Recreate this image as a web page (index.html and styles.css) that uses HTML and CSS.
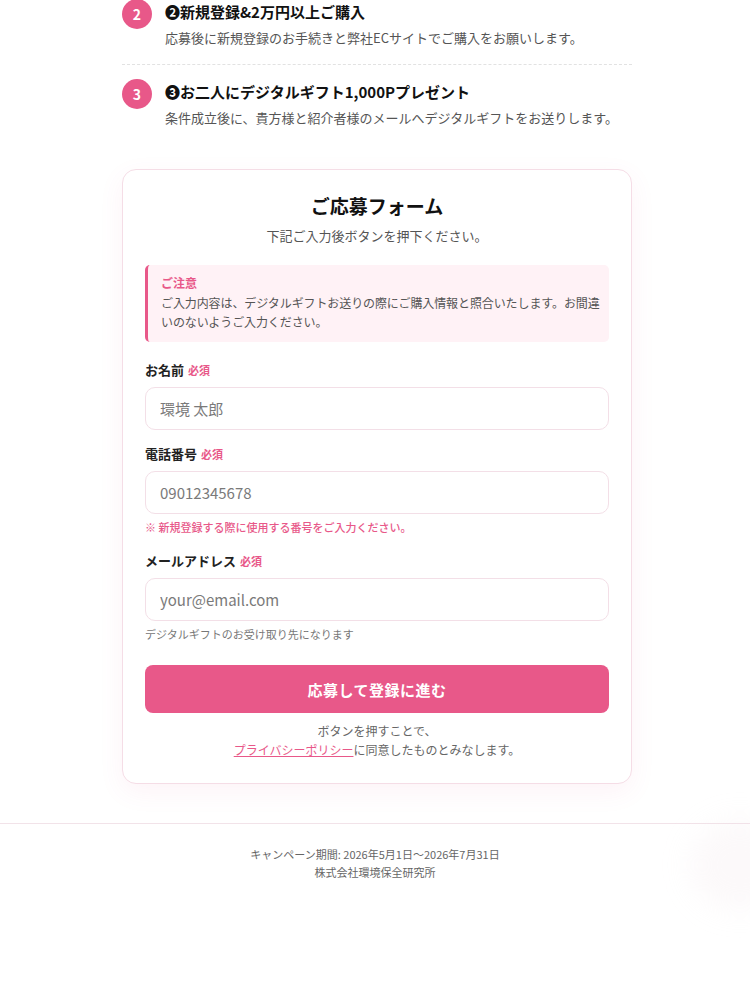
FILE: index.html
```html
<!DOCTYPE html>
<html lang="ja">
<head>
<meta charset="utf-8">
<link rel="stylesheet" href="styles.css">
</head>
<body>
<div class="page">
  <main class="wrap">
    <ol class="steps">
      <li class="step">
        <span class="num">2</span>
        <div class="step-body">
          <h3 class="step-title">❷新規登録&amp;2万円以上ご購入</h3>
          <p class="step-desc">応募後に新規登録のお手続きと弊社ECサイトでご購入をお願いします。</p>
        </div>
      </li>
      <li class="step">
        <span class="num">3</span>
        <div class="step-body">
          <h3 class="step-title">❸お二人にデジタルギフト1,000Pプレゼント</h3>
          <p class="step-desc">条件成立後に、貴方様と紹介者様のメールへデジタルギフトをお送りします。</p>
        </div>
      </li>
    </ol>

    <section class="card">
      <h2 class="card-title">ご応募フォーム</h2>
      <p class="card-sub">下記ご入力後ボタンを押下ください。</p>

      <div class="notice">
        <p class="notice-title">ご注意</p>
        <p class="notice-text">ご入力内容は、デジタルギフトお送りの際にご購入情報と照合いたします。お間違いのないようご入力ください。</p>
      </div>

      <div class="field">
        <label class="label">お名前 <span class="req">必須</span></label>
        <input class="input" type="text" placeholder="環境 太郎">
      </div>

      <div class="field">
        <label class="label">電話番号 <span class="req">必須</span></label>
        <input class="input" type="tel" placeholder="09012345678">
        <p class="note-pink">※ 新規登録する際に使用する番号をご入力ください。</p>
      </div>

      <div class="field field-mail">
        <label class="label">メールアドレス <span class="req">必須</span></label>
        <input class="input" type="email" placeholder="your@email.com">
        <p class="note-gray">デジタルギフトのお受け取り先になります</p>
      </div>

      <button class="submit" type="button">応募して登録に進む</button>

      <p class="agree">ボタンを押すことで、<br><a class="link" href="#">プライバシーポリシー</a>に同意したものとみなします。</p>
    </section>
  </main>

  <footer class="footer">
    <p>キャンペーン期間: 2026年5月1日〜2026年7月31日</p>
    <p>株式会社環境保全研究所</p>
  </footer>

  <div class="blob"></div>
</div>
</body>
</html>
```

FILE: styles.css
```css
* { box-sizing: border-box; }
html, body { margin: 0; padding: 0; background: #fff; }
body {
  font-family: "Noto Sans CJK JP", "Noto Sans", sans-serif;
  color: #222;
}
.page { position: relative; overflow: hidden; min-height: 1000px; }
.wrap { width: 510px; margin: 0 auto; padding: 0; }
.page > .wrap { margin-left: calc(50% - 253px); }

.steps { list-style: none; margin: 0; padding: 0; }
.step {
  display: flex;
  gap: 13px;
  align-items: flex-start;
  padding: 0 0 15px;
}
.step + .step {
  border-top: 1px dashed #e2e2e2;
  padding-top: 14px;
}
.step:first-child { margin-top: -1px; }
.num {
  flex: none;
  width: 30px; height: 30px;
  border-radius: 50%;
  background: #e85889;
  color: #fff;
  font-weight: 700;
  font-size: 14px;
  display: flex; align-items: center; justify-content: center;
}
.step-body { padding-top: 1px; }
.step-title {
  margin: 0;
  font-size: 15px;
  font-weight: 700;
  line-height: 24px;
  color: #111;
}
.step-desc {
  margin: 3px 0 0;
  font-size: 13px;
  line-height: 22px;
  color: #555;
}

.card {
  margin-top: 25px;
  border: 1px solid #f5dde6;
  border-radius: 14px;
  padding: 22px 22px 24px;
  box-shadow: 0 8px 26px rgba(232, 88, 137, 0.07);
  background: #fff;
}
.card-title {
  margin: 0;
  text-align: center;
  font-size: 19px;
  font-weight: 700;
  line-height: 28px;
  color: #111;
}
.card-sub {
  margin: 5px 0 0;
  text-align: center;
  font-size: 13px;
  line-height: 22px;
  color: #555;
}
.notice {
  margin-top: 18px;
  background: #fff2f6;
  border-left: 3px solid #e85889;
  border-radius: 5px;
  padding: 9px 6px 11px 13px;
}
.notice-title {
  margin: 0;
  font-size: 12px;
  font-weight: 700;
  color: #e85889;
  line-height: 18px;
}
.notice-text {
  margin: 1px 0 0;
  font-size: 12px;
  letter-spacing: -0.1px;
  line-height: 19px;
  color: #555;
}

.field { margin-top: 17px; }
.field + .field { margin-top: 13px; }
.label {
  display: block;
  font-size: 13px;
  font-weight: 700;
  line-height: 21px;
  color: #222;
}
.req {
  font-size: 11px;
  font-weight: 700;
  color: #e85889;
  margin-left: 1px;
}
.input {
  display: block;
  width: 100%;
  height: 43px;
  margin-top: 6px;
  border: 1px solid #f3dfe7;
  border-radius: 10px;
  padding: 0 14px;
  font-family: "Noto Sans CJK JP", "Noto Sans", sans-serif;
  font-size: 15px;
  color: #333;
  background: #fff;
  outline: none;
}
.input::placeholder { color: #7a7a7a; }
.note-pink {
  margin: 5px 0 0;
  font-size: 11px;
  font-weight: 500;
  line-height: 16px;
  color: #e85889;
}
.field + .field-mail { margin-top: 15px; }
.note-gray {
  margin: 5px 0 0;
  font-size: 11px;
  line-height: 16px;
  color: #777;
}
.submit {
  display: block;
  width: 100%;
  height: 48px;
  margin-top: 23px;
  border: 0;
  border-radius: 8px;
  background: #e85889;
  color: #fff;
  font-family: "Noto Sans CJK JP", "Noto Sans", sans-serif;
  font-size: 15px;
  font-weight: 700;
  letter-spacing: 0.5px;
}
.agree {
  margin: 8px 0 0;
  text-align: center;
  font-size: 12px;
  line-height: 19px;
  color: #666;
}
.link { color: #e85889; text-decoration: underline; }

.footer {
  margin-top: 39px;
  border-top: 1px solid #f2e3e9;
  padding-top: 21px;
  text-align: center;
}
.footer p {
  margin: 0;
  font-size: 11px;
  line-height: 18px;
  color: #666;
}

.blob {
  position: absolute;
  right: -40px;
  top: 820px;
  width: 100px;
  height: 90px;
  border-radius: 50%;
  background: rgba(240, 220, 228, 0.18);
  filter: blur(14px);
}
```
